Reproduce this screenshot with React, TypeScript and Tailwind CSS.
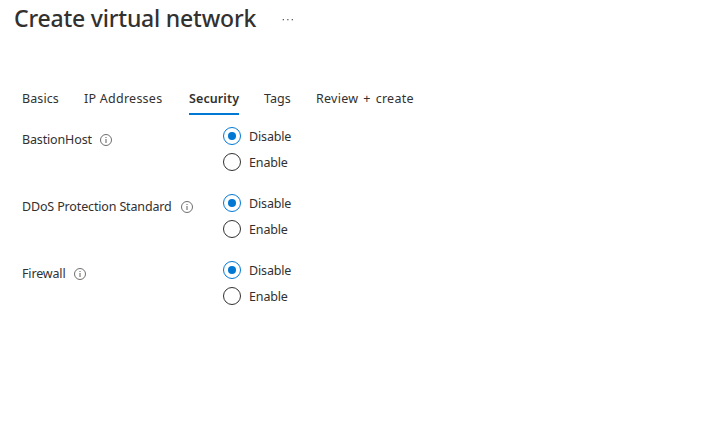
import React from 'react';

const tabs = [
  { label: 'Basics', box: 'w-[37px]', text: 'tracking-[0.1px]' },
  { label: 'IP Addresses', box: 'w-[80px]', text: 'tracking-[0.25px]' },
  { label: 'Security', box: 'w-[50px]', text: 'tracking-[0.1px]' },
  { label: 'Tags', box: 'w-[27px]', text: 'tracking-[0px]' },
  { label: 'Review + create', box: 'w-[98px]', text: 'tracking-[0.25px] [word-spacing:1.5px]' },
];

const settings = [
  { label: 'BastionHost', box: 'w-[69px]' },
  { label: 'DDoS Protection Standard', box: 'w-[150px]' },
  { label: 'Firewall', box: 'w-[43px]' },
];

function InfoIcon() {
  return (
    <svg width="12" height="12" viewBox="0 0 12 12" fill="none" className="shrink-0">
      <circle cx="6" cy="6" r="5.5" stroke="#605e5c" strokeWidth="0.9" />
      <path d="M6 5V9M6 3V4" stroke="#605e5c" />
    </svg>
  );
}

function Radio({ label, checked }: { label: string; checked?: boolean }) {
  return (
    <label className="flex h-[18px] items-center gap-2">
      <svg width="18" height="18" viewBox="0 0 18 18" fill="none">
        <circle cx="9" cy="9" r="8.5" stroke={checked ? '#0078d4' : '#323130'} />
        {checked && <circle cx="9" cy="9" r="4" fill="#0078d4" />}
      </svg>
      <span className="pt-[2px] tracking-[-0.15px]">{label}</span>
    </label>
  );
}

export default function App() {
  return (
    <main className="h-[438px] w-[726px] overflow-hidden bg-white font-['Noto_Sans','Open_Sans',sans-serif] text-[12.5px] leading-[18px] text-[#323130]">
      <header className="flex h-[38px] items-center pb-[2px] pl-[14px]">
        <h1 className="w-[268px] whitespace-nowrap text-[23px] font-medium leading-[32px] tracking-[-0.2px]">Create virtual network</h1>
        <svg width="13" height="3" viewBox="0 0 13 3" fill="#605e5c" className="mt-[2px]">
          <rect x="0.7" y="1" width="1.3" height="1.3" />
          <rect x="5.2" y="1" width="1.3" height="1.3" />
          <rect x="9.7" y="1" width="1.3" height="1.3" />
        </svg>
      </header>
      <nav className="mt-[49px] flex gap-[25px] pl-[22px]">
        {tabs.map((tab) => (
          <div key={tab.label} className={`${tab.box} h-[28px] whitespace-nowrap pt-[3px] ${tab.label === 'Security' ? 'border-b-2 border-[#0078d4] font-semibold' : ''}`}>
            <span className={tab.text}>{tab.label}</span>
          </div>
        ))}
      </nav>
      <section className="mt-3 flex flex-col gap-[23px] pl-[22px]">
        {settings.map((setting) => (
          <div key={setting.label} className="flex h-11 items-start">
            <div className="flex w-[201px] items-center gap-[9px] whitespace-nowrap pt-[4px]">
              <span className={`${setting.box} tracking-[-0.15px]`}>{setting.label}</span>
              <InfoIcon />
            </div>
            <div className="flex flex-col gap-2">
              <Radio label="Disable" checked />
              <Radio label="Enable" />
            </div>
          </div>
        ))}
      </section>
    </main>
  );
}
